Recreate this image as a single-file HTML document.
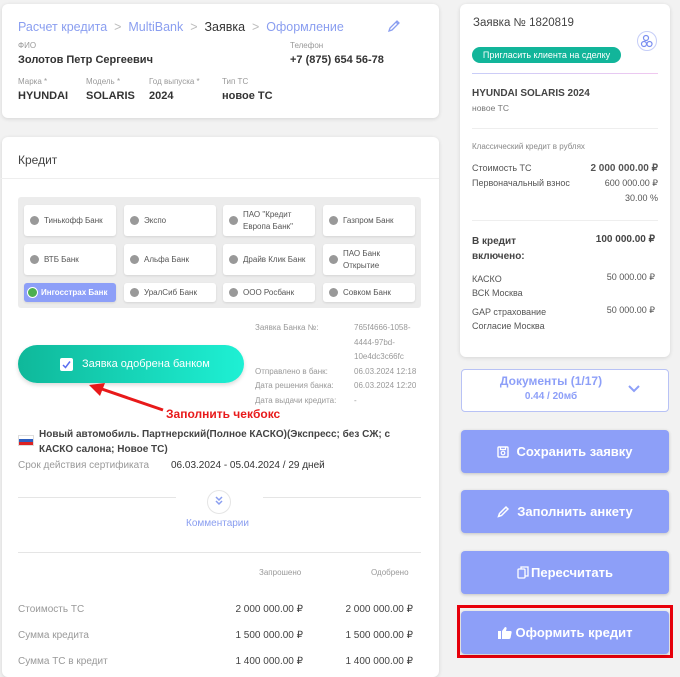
<!DOCTYPE html>
<html><head><meta charset="utf-8"><style>
*{box-sizing:border-box;margin:0;padding:0}
body{width:680px;height:671px;overflow:hidden;background:#f2f2f2;font-family:"Liberation Sans","Noto Sans CJK SC",sans-serif;color:#333;position:relative}
.card{position:absolute;background:#fff;border-radius:6px;box-shadow:0 1px 4px rgba(0,0,0,.12)}
.a{position:absolute;white-space:nowrap}
.lab{font-size:8px;color:#999}
.val{font-size:11px;color:#333;font-weight:bold}
.bc{font-size:12.5px;color:#8a9ef0}
.cell{position:absolute;background:#fff;border-radius:3px;box-shadow:0 1px 2px rgba(0,0,0,.1);font-size:8px;color:#555;display:flex;align-items:center;padding-left:6px;line-height:12px;overflow:hidden}
.dot{width:9px;height:9px;border-radius:50%;background:#999;margin-right:5px;flex:none}
.btn{position:absolute;left:461px;width:208px;height:43px;background:#8d9ff8;border-radius:4px;color:#fff;font-size:13px;font-weight:bold;display:flex;align-items:center;justify-content:center;box-shadow:0 1px 3px rgba(0,0,0,.2)}
.r{text-align:right}
</style></head><body>

<div class="card" style="left:2px;top:4px;width:437px;height:114px"></div>
<div class="a bc" style="left:18px;top:20px">Расчет кредита &nbsp;<span style="color:#bbb">&gt;</span>&nbsp; MultiBank &nbsp;<span style="color:#bbb">&gt;</span>&nbsp; <span style="color:#333">Заявка</span> &nbsp;<span style="color:#bbb">&gt;</span>&nbsp; Оформление</div>
<svg class="a" style="left:387px;top:19px" width="14" height="14" viewBox="0 0 14 14"><path d="M2 12 L3 9 L10 2 L12 4 L5 11 Z M9 3 L11 5" fill="none" stroke="#8a9ef0" stroke-width="1.3"/></svg>
<div class="a lab" style="left:18px;top:41px">ФИО</div>
<div class="a val" style="left:18px;top:54px">Золотов Петр Сергеевич</div>
<div class="a lab" style="left:290px;top:41px">Телефон</div>
<div class="a val" style="left:290px;top:54px">+7 (875) 654 56-78</div>
<div class="a lab" style="left:18px;top:77px">Марка *</div>
<div class="a lab" style="left:86px;top:77px">Модель *</div>
<div class="a lab" style="left:149px;top:77px">Год выпуска *</div>
<div class="a lab" style="left:222px;top:77px">Тип ТС</div>
<div class="a val" style="left:18px;top:90px">HYUNDAI</div>
<div class="a val" style="left:86px;top:90px">SOLARIS</div>
<div class="a val" style="left:149px;top:90px">2024</div>
<div class="a val" style="left:222px;top:90px">новое ТС</div>

<div class="card" style="left:2px;top:137px;width:437px;height:540px"></div>
<div class="a" style="left:18px;top:153px;font-size:12px;color:#444">Кредит</div>
<div style="position:absolute;left:0;top:178px;width:439px;height:1px;background:#eee"></div>
<div class="a" style="left:18px;top:197px;width:403px;height:111px;background:#ececec;border-radius:3px"></div>
<div class="cell" style="left:24px;top:205px;width:92px;height:31px"><span class="dot"></span>Тинькофф Банк</div>
<div class="cell" style="left:124px;top:205px;width:92px;height:31px"><span class="dot"></span>Экспо</div>
<div class="cell" style="left:223px;top:205px;width:92px;height:31px"><span class="dot"></span>ПАО "Кредит<br>Европа Банк"</div>
<div class="cell" style="left:323px;top:205px;width:92px;height:31px"><span class="dot"></span>Газпром Банк</div>
<div class="cell" style="left:24px;top:244px;width:92px;height:31px"><span class="dot"></span>ВТБ Банк</div>
<div class="cell" style="left:124px;top:244px;width:92px;height:31px"><span class="dot"></span>Альфа Банк</div>
<div class="cell" style="left:223px;top:244px;width:92px;height:31px"><span class="dot"></span>Драйв Клик Банк</div>
<div class="cell" style="left:323px;top:244px;width:92px;height:31px"><span class="dot"></span>ПАО Банк<br>Открытие</div>
<div class="cell" style="left:24px;top:283px;width:92px;height:19px;background:#8d9ff8;color:#fff;font-weight:bold;padding-left:3px"><span class="dot" style="background:#4caf50;border:1.5px solid #fff;width:11px;height:11px;margin-right:3px"></span>Ингосстрах Банк</div>
<div class="cell" style="left:124px;top:283px;width:92px;height:19px"><span class="dot"></span>УралСиб Банк</div>
<div class="cell" style="left:223px;top:283px;width:92px;height:19px"><span class="dot"></span>ООО Росбанк</div>
<div class="cell" style="left:323px;top:283px;width:92px;height:19px"><span class="dot"></span>Совком Банк</div>

<div class="a" style="left:255px;top:321px;font-size:8px;color:#999;line-height:14.6px">Заявка Банка №:<br><br><br>Отправлено в банк:<br>Дата решения банка:<br>Дата выдачи кредита:</div>
<div class="a" style="left:354px;top:321px;font-size:8px;color:#999;line-height:14.6px">765f4666-1058-<br>4444-97bd-<br>10e4dc3c66fc<br>06.03.2024 12:18<br>06.03.2024 12:20<br>-</div>

<div class="a" style="left:18px;top:345px;width:226px;height:38px;border-radius:19px;background:linear-gradient(90deg,#0fb89a,#1ef0d4);box-shadow:0 2px 4px rgba(0,0,0,.15)"></div>
<div class="a" style="left:60px;top:358px;width:13px;height:13px;background:#fff;border-radius:2px"></div>
<svg class="a" style="left:61px;top:359px" width="11" height="11"><path d="M2 6 L4.5 8.5 L9 2.5" fill="none" stroke="#5a6ef0" stroke-width="1.5"/></svg>
<div class="a" style="left:82px;top:358px;font-size:11px;color:#fff">Заявка одобрена банком</div>
<svg class="a" style="left:85px;top:380px" width="90" height="35"><path d="M8 6 L78 30" stroke="#e8191a" stroke-width="3"/><path d="M4 5 L20 3 L15 16 Z" fill="#e8191a"/></svg>
<div class="a" style="left:166px;top:407px;font-size:12px;font-weight:bold;color:#e8191a">Заполнить чекбокс</div>

<div class="a" style="left:18px;top:435px;width:16px;height:11px;background:linear-gradient(#fff 0 33%,#2f5fbf 33% 66%,#d22 66%);border:1px solid #ddd"></div>
<div class="a" style="left:39px;top:427px;font-size:10px;font-weight:bold;color:#444;line-height:15px">Новый автомобиль. Партнерский(Полное КАСКО)(Экспресс; без СЖ; с<br>КАСКО салона; Новое ТС)</div>
<div class="a" style="left:18px;top:460px;font-size:10px;color:#999">Срок действия сертификата</div>
<div class="a" style="left:171px;top:460px;font-size:10px;color:#333">06.03.2024 - 05.04.2024 / 29 дней</div>
<div style="position:absolute;left:18px;top:497px;width:158px;height:1px;background:#e5e5e5"></div>
<div style="position:absolute;left:263px;top:497px;width:158px;height:1px;background:#e5e5e5"></div>
<div class="a" style="left:207px;top:490px;width:24px;height:24px;border-radius:50%;border:1px solid #e5e5e5;background:#fff"></div>
<svg class="a" style="left:213px;top:495px" width="12" height="12"><path d="M3 2 L6 5 L9 2 M3 6 L6 9 L9 6" fill="none" stroke="#8a9ef0" stroke-width="1.5"/></svg>
<div class="a" style="left:186px;top:518px;font-size:10px;color:#8a9ef0">Комментарии</div>
<div style="position:absolute;left:18px;top:552px;width:403px;height:1px;background:#e5e5e5"></div>
<div class="a" style="left:259px;top:568px;font-size:8px;color:#999">Запрошено</div>
<div class="a" style="left:371px;top:568px;font-size:8px;color:#999">Одобрено</div>
<div class="a" style="left:18px;top:597px;font-size:10px;color:#999;line-height:26px">Стоимость ТС<br>Сумма кредита<br>Сумма ТС в кредит</div>
<div class="a r" style="left:200px;width:103px;top:597px;font-size:10px;color:#444;line-height:26px">2 000 000.00 ₽<br>1 500 000.00 ₽<br>1 400 000.00 ₽</div>
<div class="a r" style="left:310px;width:103px;top:597px;font-size:10px;color:#444;line-height:26px">2 000 000.00 ₽<br>1 500 000.00 ₽<br>1 400 000.00 ₽</div>

<div class="card" style="left:460px;top:4px;width:210px;height:353px"></div>
<div class="a" style="left:473px;top:17px;font-size:11.5px;color:#444">Заявка № 1820819</div>
<div class="a" style="left:637px;top:31px;width:20px;height:20px;border-radius:50%;border:1px solid #c5cdf8"></div>
<svg class="a" style="left:640px;top:34px" width="14" height="14"><circle cx="6" cy="4" r="2.5" fill="none" stroke="#7a8ef0" stroke-width="1.2"/><circle cx="4" cy="10" r="2.5" fill="none" stroke="#7a8ef0" stroke-width="1.2"/><circle cx="9.5" cy="10" r="2.5" fill="none" stroke="#7a8ef0" stroke-width="1.2"/></svg>
<div class="a" style="left:472px;top:47px;width:149px;height:16px;border-radius:8px;background:#12b59a;color:#fff;font-size:9px;text-align:center;line-height:16px">Пригласить клиента на сделку</div>
<div style="position:absolute;left:472px;top:73px;width:186px;height:1px;background:linear-gradient(90deg,#c8cdf8,#f0c8f0)"></div>
<div class="a" style="left:472px;top:88px;font-size:10px;font-weight:bold;color:#444">HYUNDAI SOLARIS 2024</div>
<div class="a" style="left:472px;top:103px;font-size:8.5px;color:#777">новое ТС</div>
<div style="position:absolute;left:472px;top:128px;width:186px;height:1px;background:#eee"></div>
<div class="a" style="left:472px;top:142px;font-size:8px;color:#888">Классический кредит в рублях</div>
<div class="a" style="left:472px;top:161px;font-size:9px;color:#555;line-height:15px">Стоимость ТС<br>Первоначальный взнос</div>
<div class="a r" style="left:560px;width:98px;top:161px;font-size:9px;color:#555;line-height:15px"><b style="font-size:10px">2 000 000.00 ₽</b><br>600 000.00 ₽<br>30.00 %</div>
<div style="position:absolute;left:472px;top:220px;width:186px;height:1px;background:#eee"></div>
<div class="a" style="left:472px;top:234px;font-size:10px;font-weight:bold;color:#444;line-height:15px">В кредит<br>включено:</div>
<div class="a r" style="left:560px;width:95px;top:234px;font-size:10px;font-weight:bold;color:#444">100 000.00 ₽</div>
<div class="a" style="left:472px;top:272px;font-size:9px;color:#555;line-height:14px">КАСКО<br>ВСК Москва</div>
<div class="a r" style="left:560px;width:95px;top:272px;font-size:9px;color:#555">50 000.00 ₽</div>
<div class="a" style="left:472px;top:305px;font-size:9px;color:#555;line-height:14px">GAP страхование<br>Согласие Москва</div>
<div class="a r" style="left:560px;width:95px;top:305px;font-size:9px;color:#555">50 000.00 ₽</div>

<div class="a" style="left:461px;top:369px;width:208px;height:43px;border:1px solid #b8c2f5;border-radius:4px;background:#fff"></div>
<div class="a" style="left:461px;top:374px;width:180px;text-align:center;font-size:12px;font-weight:bold;color:#8d9ff8;line-height:14px">Документы (1/17)<br><span style="font-size:10px">0.44 / 20мб</span></div>
<svg class="a" style="left:627px;top:384px" width="14" height="10"><path d="M2 2 L7 7 L12 2" fill="none" stroke="#8d9ff8" stroke-width="2"/></svg>

<div class="btn" style="top:430px"><svg width="12" height="12" style="margin-right:7px"><rect x="1" y="1" width="10" height="10" rx="1" fill="none" stroke="#fff" stroke-width="1.4"/><circle cx="6" cy="7" r="1.8" fill="none" stroke="#fff" stroke-width="1.2"/><path d="M3.5 1 V3.5 H8.5 V1" fill="none" stroke="#fff" stroke-width="1.2"/></svg>Сохранить заявку</div>
<div class="btn" style="top:490px"><svg width="13" height="13" style="margin-right:7px"><path d="M1.5 11.5 L2.5 8.5 L9 2 L11 4 L4.5 10.5 Z" fill="none" stroke="#fff" stroke-width="1.5"/></svg>Заполнить анкету</div>
<div class="btn" style="top:551px"><svg width="12" height="13" style="margin-right:2px"><rect x="1" y="3" width="7" height="9" rx="1" fill="none" stroke="#fff" stroke-width="1.3"/><path d="M4 3 V1 H11 V10 H8" fill="none" stroke="#fff" stroke-width="1.3"/></svg>Пересчитать</div>
<div class="a" style="left:457px;top:605px;width:216px;height:53px;border:3px solid #e8000b"></div>
<div class="btn" style="top:611px"><svg width="14" height="13" style="margin-right:4px"><rect x="0" y="5" width="3" height="8" fill="#fff"/><path d="M4 5 L7 1 Q9 1 8.5 3 L8 5 H12.5 Q14 5 13.5 7 L12.5 12 Q12 13 11 13 H4 Z" fill="#fff"/></svg>Оформить кредит</div>
</body></html>
